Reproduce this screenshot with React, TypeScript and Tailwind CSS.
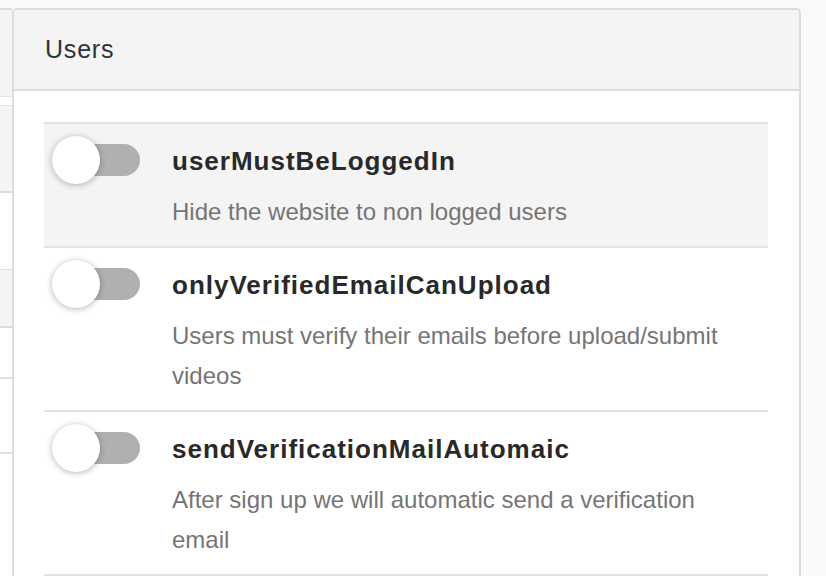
const settings = [
  {
    key: "userMustBeLoggedIn",
    text: "Hide the website to non logged users",
    active: true,
  },
  {
    key: "onlyVerifiedEmailCanUpload",
    text: "Users must verify their emails before upload/submit videos",
    active: false,
  },
  {
    key: "sendVerificationMailAutomaic",
    text: "After sign up we will automatic send a verification email",
    active: false,
  },
];

function Toggle() {
  return (
    <div className="relative ml-2 mt-3 h-12 w-[88px] shrink-0">
      <div className="absolute left-1 right-0 top-2 h-8 rounded-full bg-[#b0b0b0]" />
      <div className="absolute left-0 top-0 h-12 w-12 rounded-full bg-white shadow-[0_1px_6px_rgba(0,0,0,0.3)]" />
    </div>
  );
}

// the panel behind the card, only its left edge shows
function BackStrip() {
  return (
    <div className="flex w-3 shrink-0 flex-col pt-2">
      <div className="h-[88px] border-t-2 border-[#dcdcdc] bg-[#f4f4f4]" />
      <div className="h-[10px] border-y border-[#e4e4e4] bg-white" />
      <div className="h-[87px] border-b-2 border-[#dcdcdc] bg-[#f4f4f4]" />
      <div className="h-[77px] border-b border-[#e0e0e0] bg-white" />
      <div className="h-[58px] border-b-2 border-[#dcdcdc] bg-[#f4f4f4]" />
      <div className="h-[51px] border-b-2 border-[#e0e0e0] bg-white" />
      <div className="h-[75px] border-b-2 border-[#e0e0e0] bg-white" />
      <div className="flex-1 bg-white" />
    </div>
  );
}

export default function App() {
  return (
    <div
      className="flex h-[576px] w-[826px] overflow-hidden bg-[#f9f9f9] text-[#333]"
      style={{ fontFamily: '"Liberation Sans", Arial, sans-serif' }}
    >
      <BackStrip />
      <section className="mt-2 w-[789px] shrink-0 rounded-t-[5px] border-2 border-b-0 border-[#dcdcdc] bg-white">
        <header className="flex h-[81px] items-center rounded-t-[3px] border-b-2 border-[#dedede] bg-[#f4f4f4] pl-[31px]">
          <h2 className="text-[25px] tracking-[0.8px] text-[#333]">Users</h2>
        </header>
        <ul className="pl-[30px] pr-[31px] pt-[31px]">
          {settings.map((s) => (
            <li
              key={s.key}
              className={`flex gap-8 border-t-2 border-[#e2e2e2] pb-[14px] pr-6 last:border-b-2 ${
                s.active ? "bg-[#f4f4f4]" : "bg-white"
              }`}
            >
              <Toggle />
              <div className="min-w-0 flex-1 pt-5">
                <div className="text-[26px] font-bold leading-[34px] tracking-[1px] text-[#292929]">
                  {s.key}
                </div>
                <p className="mt-[14px] text-[24px] leading-[40px] text-[#757575]">{s.text}</p>
              </div>
            </li>
          ))}
        </ul>
      </section>
    </div>
  );
}
